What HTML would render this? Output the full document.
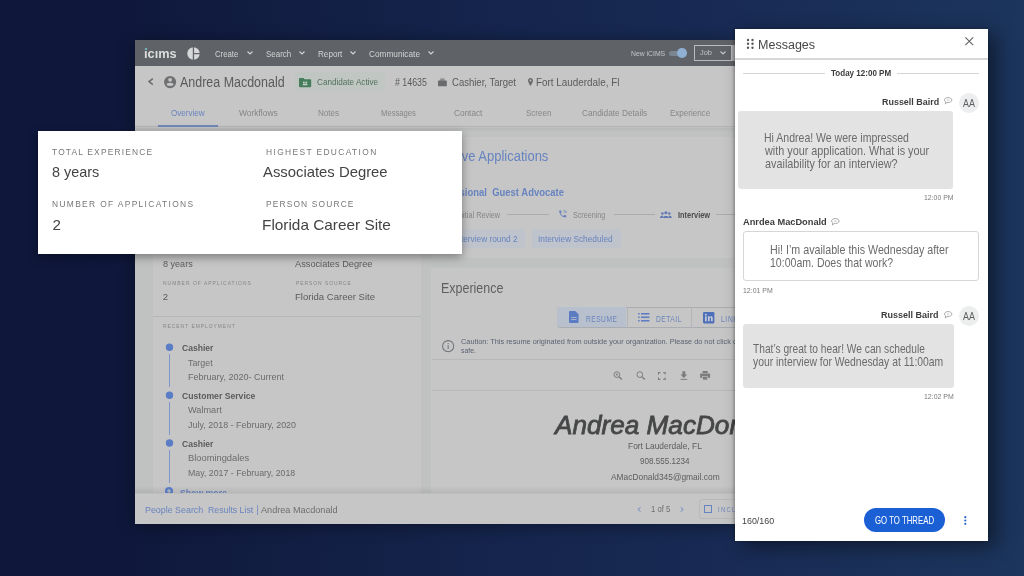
<!DOCTYPE html>
<html><head><meta charset="utf-8">
<style>
html,body{margin:0;padding:0;width:1024px;height:576px;overflow:hidden}
body{position:relative;font-family:"Liberation Sans",sans-serif;background:linear-gradient(90deg,#0f173b 0%,#0f183c 12%,#121d42 26%,#15254d 50%,#192c55 75%,#1c355c 100%)}
.a{position:absolute}
.t{position:absolute;white-space:pre;line-height:1;transform-origin:0 0}
svg{position:absolute;overflow:visible}
</style></head><body>
<div id="w" style="position:absolute;left:0;top:0;width:1024px;height:576px;filter:blur(0.45px)">

<!-- ================= APP WINDOW ================= -->
<div class="a" style="left:135px;top:39.5px;width:600px;height:484.5px;background:#c0c2c1;box-shadow:0 2px 16px rgba(0,0,0,.4)"></div>
<!-- nav -->
<div class="a" style="left:135px;top:39.5px;width:600px;height:26.2px;background:#5f6266"></div>
<!-- subheader -->
<div class="a" style="left:135px;top:65.7px;width:600px;height:60.6px;background:#c6c6c6"></div>
<div class="a" style="left:135px;top:126.3px;width:600px;height:1.2px;background:#b3b5b5"></div>
<div class="a" style="left:135px;top:128px;width:600px;height:4px;background:linear-gradient(#b7b9b9,#c0c2c1)"></div>
<!-- left card -->
<div class="a" style="left:152.6px;top:134px;width:268.7px;height:360px;background:#c6c6c6"></div>
<div class="a" style="left:152.6px;top:316px;width:268.7px;height:1px;background:#b5b6b6"></div>
<!-- active apps card -->
<div class="a" style="left:431.5px;top:137.2px;width:303.5px;height:120.8px;background:#c6c6c6;border-radius:2px"></div>
<!-- experience card -->
<div class="a" style="left:430.8px;top:267.8px;width:304.2px;height:226px;background:#c6c6c6;border-radius:2px"></div>
<div class="a" style="left:431.7px;top:359px;width:303.3px;height:1px;background:#b7b8b8"></div>
<div class="a" style="left:431.7px;top:389.7px;width:303.3px;height:1px;background:#b7b8b8"></div>

<!-- nav icons -->
<div class="a" style="left:145px;top:47.8px;width:2.2px;height:2.2px;background:#70b3ba"></div>
<svg style="left:187px;top:46.7px" width="13" height="13" viewBox="0 0 13 13"><circle cx="6.5" cy="6.5" r="6.2" fill="#d6d7d8"/><rect x="5.8" y="0" width="1.3" height="13" fill="#5f6266"/><rect x="7" y="6" width="6" height="1.2" fill="#5f6266"/></svg>
<svg style="left:246.5px;top:51px" width="6" height="4" viewBox="0 0 6 4"><polyline points="0.5,0.5 3,3 5.5,0.5" fill="none" stroke="#d3d4d5" stroke-width="1.1"/></svg>
<svg style="left:298.5px;top:51px" width="6" height="4" viewBox="0 0 6 4"><polyline points="0.5,0.5 3,3 5.5,0.5" fill="none" stroke="#d3d4d5" stroke-width="1.1"/></svg>
<svg style="left:350px;top:51px" width="6" height="4" viewBox="0 0 6 4"><polyline points="0.5,0.5 3,3 5.5,0.5" fill="none" stroke="#d3d4d5" stroke-width="1.1"/></svg>
<svg style="left:428.2px;top:51px" width="6" height="4" viewBox="0 0 6 4"><polyline points="0.5,0.5 3,3 5.5,0.5" fill="none" stroke="#d3d4d5" stroke-width="1.1"/></svg>
<div class="a" style="left:669px;top:50.6px;width:17.5px;height:5px;background:#7b8591;border-radius:3px"></div>
<div class="a" style="left:677px;top:48.2px;width:9.8px;height:9.8px;background:#8fb0d2;border-radius:50%"></div>
<div class="a" style="left:694px;top:45.2px;width:38px;height:15.7px;border:1px solid #b9bbbd;box-sizing:border-box"></div>
<svg style="left:719.5px;top:51.3px" width="6" height="4" viewBox="0 0 6 4"><polyline points="0.5,0.5 3,3 5.5,0.5" fill="none" stroke="#c8c9ca" stroke-width="1.1"/></svg>
<div class="a" style="left:732px;top:45.2px;width:3px;height:15.7px;background:#a9abad"></div>

<!-- subheader icons -->
<svg style="left:147.9px;top:78.3px" width="5.6" height="7.2" viewBox="0 0 5.6 7.2"><polyline points="4.8,0.6 1,3.6 4.8,6.6" fill="none" stroke="#6a6b6c" stroke-width="1.5"/></svg>
<svg style="left:164.1px;top:75.9px" width="12.2" height="12.2" viewBox="0 0 24 24"><circle cx="12" cy="12" r="12" fill="#707172"/><circle cx="12" cy="7.4" r="3.7" fill="#c6c6c6"/><ellipse cx="12" cy="16.4" rx="6.6" ry="3.3" fill="#c6c6c6"/></svg>
<div class="a" style="left:295.4px;top:72.2px;width:89.9px;height:19.2px;background:#c0c7c3;border-radius:3px"></div>
<svg style="left:298.7px;top:77.6px" width="12.2" height="9.2" viewBox="0 0 12 9"><path d="M0 0.8 Q0 0 0.8 0 H4.4 L5.6 1.2 H11.2 Q12 1.2 12 2 V8.2 Q12 9 11.2 9 H0.8 Q0 9 0 8.2Z" fill="#467d5c"/><circle cx="4.8" cy="4.4" r="0.9" fill="#c9d6cf"/><circle cx="7.2" cy="4.4" r="0.9" fill="#c9d6cf"/><rect x="3.6" y="5.6" width="4.8" height="1.6" rx="0.8" fill="#c9d6cf"/></svg>
<svg style="left:437.8px;top:78.5px" width="8.8" height="7.4" viewBox="0 0 9 7.5"><rect x="0" y="1.6" width="9" height="5.9" rx="0.6" fill="#6a6b6c"/><rect x="3" y="0" width="3" height="2.2" fill="none" stroke="#6a6b6c" stroke-width="0.9"/></svg>
<svg style="left:528px;top:77.8px" width="5" height="8" viewBox="0 0 10 16"><path d="M5 0 C2.2 0 0 2.2 0 5 C0 8.8 5 16 5 16 C5 16 10 8.8 10 5 C10 2.2 7.8 0 5 0Z M5 3.2 A1.8 1.8 0 1 1 5 6.8 A1.8 1.8 0 1 1 5 3.2Z" fill="#6a6b6c" fill-rule="evenodd"/></svg>
<!-- tab underline -->
<div class="a" style="left:157.6px;top:125px;width:60.6px;height:2px;background:#6f88b6"></div>

<!-- left card timeline -->
<svg style="left:0;top:0" width="1" height="1"><circle cx="169.5" cy="347.2" r="3.7" fill="#5b7dc6"/></svg>
<div class="a" style="left:169px;top:354px;width:1px;height:33.3px;background:#7f98cc"></div>
<svg style="left:0;top:0" width="1" height="1"><circle cx="169.5" cy="395.2" r="3.7" fill="#5b7dc6"/></svg>
<div class="a" style="left:169px;top:402px;width:1px;height:33.3px;background:#7f98cc"></div>
<svg style="left:0;top:0" width="1" height="1"><circle cx="169.5" cy="443.0" r="3.7" fill="#5b7dc6"/></svg>
<div class="a" style="left:169px;top:450.3px;width:1px;height:32.5px;background:#7f98cc"></div>
<svg style="left:165.3px;top:486.6px" width="8" height="8" viewBox="0 0 8 8"><circle cx="4" cy="4" r="4" fill="#5a7ecb"/><path d="M4 2 V6 M2 4 H6" stroke="#cacaca" stroke-width="1"/></svg>

<!-- active apps card details -->
<div class="a" style="left:507px;top:214.3px;width:41.8px;height:1px;background:#ababab"></div>
<div class="a" style="left:613.6px;top:214.3px;width:41.2px;height:1px;background:#ababab"></div>
<div class="a" style="left:716px;top:214.3px;width:19px;height:1px;background:#ababab"></div>
<svg style="left:558px;top:209.3px" width="9.4" height="9.8" viewBox="0 0 24 24"><path d="M6.6 10.8c1.4 2.8 3.8 5.1 6.6 6.6l2.2-2.2c.3-.3.7-.4 1-.2 1.1.4 2.3.6 3.6.6.6 0 1 .4 1 1V20c0 .6-.4 1-1 1C10.6 21 3 13.4 3 4c0-.6.4-1 1-1h3.5c.6 0 1 .4 1 1 0 1.3.2 2.5.6 3.6.1.3 0 .7-.2 1L6.6 10.8z" fill="#6b82bb"/><path d="M14.5 2.5 a7.5 7.5 0 0 1 7 7 M14.5 6.2 a3.8 3.8 0 0 1 3.4 3.4" fill="none" stroke="#6b82bb" stroke-width="1.8"/></svg>
<svg style="left:660.4px;top:210.8px" width="11.8" height="7" viewBox="0 0 24 14"><circle cx="12" cy="3.5" r="3.2" fill="#5f78b4"/><circle cx="5" cy="5" r="2.5" fill="#5f78b4"/><circle cx="19" cy="5" r="2.5" fill="#5f78b4"/><path d="M6 14 C6 9 18 9 18 14Z" fill="#5f78b4"/><path d="M0 14 C0 10 4 9 6.5 10 L5 14Z M24 14 C24 10 20 9 17.5 10 L19 14Z" fill="#5f78b4"/></svg>
<div class="a" style="left:440px;top:229.3px;width:85px;height:18.3px;background:#bfc3cb;border-radius:2px"></div>
<div class="a" style="left:532.1px;top:229.3px;width:88.5px;height:18.3px;background:#bfc3cb;border-radius:2px"></div>

<!-- experience card details -->
<div class="a" style="left:556.7px;top:306.7px;width:190px;height:20.9px;border:1px solid #a9acb0;border-radius:3px;box-sizing:border-box"></div>
<div class="a" style="left:557.2px;top:307.2px;width:69.3px;height:19.9px;background:#b8c0cd;border-radius:2.5px 0 0 2.5px"></div>
<div class="a" style="left:626.5px;top:306.7px;width:1px;height:20.9px;background:#b3b4b6"></div>
<div class="a" style="left:691.4px;top:306.7px;width:1px;height:20.9px;background:#b3b4b6"></div>
<svg style="left:568.6px;top:311.3px" width="9.6" height="12" viewBox="0 0 10 12.5"><path d="M0 1 Q0 0 1 0 H6.5 L10 3.5 V11.5 Q10 12.5 9 12.5 H1 Q0 12.5 0 11.5Z" fill="#5b7bc2"/><rect x="2.2" y="6.2" width="5.6" height="0.9" fill="#b8c0cd"/><rect x="2.2" y="8.4" width="5.6" height="0.9" fill="#b8c0cd"/></svg>
<svg style="left:637.9px;top:313px" width="11.6" height="8.5" viewBox="0 0 12 9"><g fill="#5b7bc2"><rect x="0" y="0" width="1.6" height="1.6"/><rect x="0" y="3.7" width="1.6" height="1.6"/><rect x="0" y="7.4" width="1.6" height="1.6"/><rect x="3" y="0" width="9" height="1.6"/><rect x="3" y="3.7" width="9" height="1.6"/><rect x="3" y="7.4" width="9" height="1.6"/></g></svg>
<svg style="left:703.4px;top:311.5px" width="11.4" height="11.4" viewBox="0 0 12 12"><rect width="12" height="12" rx="1.2" fill="#4f6fb8"/><rect x="2.2" y="4.6" width="1.7" height="5.2" fill="#c8cdd8"/><circle cx="3.05" cy="2.9" r="1" fill="#c8cdd8"/><path d="M5.3 4.6 H6.9 V5.4 C7.3 4.7 8 4.5 8.6 4.5 C9.8 4.5 10.2 5.3 10.2 6.5 V9.8 H8.5 V6.9 C8.5 6.2 8.3 5.9 7.8 5.9 C7.2 5.9 7 6.3 7 7 V9.8 H5.3Z" fill="#c8cdd8"/></svg>
<svg style="left:441.9px;top:340.4px" width="12.3" height="12.3" viewBox="0 0 12 12"><circle cx="6" cy="6" r="5.4" fill="none" stroke="#6e7278" stroke-width="1"/><rect x="5.5" y="5" width="1" height="3.8" fill="#6e7278"/><rect x="5.5" y="3" width="1" height="1" fill="#6e7278"/></svg>
<!-- toolbar icons -->
<svg style="left:613px;top:371px" width="9.5" height="9" viewBox="0 0 10 10"><circle cx="4" cy="4" r="3.2" fill="none" stroke="#7c7d7e" stroke-width="1.1"/><path d="M6.4 6.4 L9.5 9.5" stroke="#7c7d7e" stroke-width="1.4"/><path d="M4 2.5 V5.5 M2.5 4 H5.5" stroke="#7c7d7e" stroke-width="0.8"/></svg>
<svg style="left:635.7px;top:371px" width="9.5" height="9" viewBox="0 0 10 10"><circle cx="4" cy="4" r="3.2" fill="none" stroke="#7c7d7e" stroke-width="1.1"/><path d="M6.4 6.4 L9.5 9.5" stroke="#7c7d7e" stroke-width="1.4"/></svg>
<svg style="left:657.8px;top:371.5px" width="7.7" height="8" viewBox="0 0 8 8"><path d="M0.5 2.5 V0.5 H2.5 M5.5 0.5 H7.5 V2.5 M7.5 5.5 V7.5 H5.5 M2.5 7.5 H0.5 V5.5" fill="none" stroke="#7c7d7e" stroke-width="1.1"/></svg>
<svg style="left:679.7px;top:371px" width="7.7" height="9" viewBox="0 0 8 9"><path d="M2.5 0 H5.5 V3.5 H7.5 L4 7 L0.5 3.5 H2.5Z" fill="#7c7d7e"/><rect x="0.5" y="8" width="7" height="1" fill="#7c7d7e"/></svg>
<svg style="left:700.3px;top:371px" width="10.2" height="9" viewBox="0 0 10 9"><rect x="2.5" y="0" width="5" height="2" fill="#7c7d7e"/><rect x="0" y="2.5" width="10" height="4.5" rx="1" fill="#7c7d7e"/><rect x="2.5" y="5.5" width="5" height="3.5" fill="#7c7d7e" stroke="#cacaca" stroke-width="0.6"/></svg>

<div class="t" style="left:144.03px;top:47.08px;font-size:13.08px;color:#dcdddd;font-weight:700;transform:scaleX(0.975)">ıcıms</div>
<div class="t" style="left:215.20px;top:48.65px;font-size:9.59px;color:#d3d4d5;transform:scaleX(0.810)">Create</div>
<div class="t" style="left:266.10px;top:48.65px;font-size:9.59px;color:#d3d4d5;transform:scaleX(0.830)">Search</div>
<div class="t" style="left:317.90px;top:48.65px;font-size:9.59px;color:#d3d4d5;transform:scaleX(0.848)">Report</div>
<div class="t" style="left:369.40px;top:48.65px;font-size:9.59px;color:#d3d4d5;transform:scaleX(0.863)">Communicate</div>
<div class="t" style="left:630.50px;top:49.62px;font-size:7.27px;color:#c4c6c8;transform:scaleX(0.939)">New iCIMS</div>
<div class="t" style="left:700.00px;top:49.40px;font-size:7.99px;color:#c4c6c8;transform:scaleX(0.923)">Job</div>
<div class="t" style="left:180.10px;top:76.14px;font-size:13.95px;color:#5a5b5c;transform:scaleX(0.894)">Andrea Macdonald</div>
<div class="t" style="left:317.00px;top:77.20px;font-size:9.88px;color:#52705c;transform:scaleX(0.824)">Candidate Active</div>
<div class="t" style="left:395.20px;top:78.25px;font-size:10.17px;color:#5a5b5c;transform:scaleX(0.870)"># 14635</div>
<div class="t" style="left:451.50px;top:78.25px;font-size:10.17px;color:#5a5b5c;transform:scaleX(0.938)">Cashier, Target</div>
<div class="t" style="left:536.43px;top:78.25px;font-size:10.17px;color:#5a5b5c;transform:scaleX(0.973)">Fort Lauderdale, Fl</div>
<div class="t" style="left:170.80px;top:107.97px;font-size:9.45px;color:#6884c0;transform:scaleX(0.855)">Overview</div>
<div class="t" style="left:238.70px;top:107.97px;font-size:9.45px;color:#858687;transform:scaleX(0.893)">Workflows</div>
<div class="t" style="left:317.80px;top:107.97px;font-size:9.45px;color:#858687;transform:scaleX(0.856)">Notes</div>
<div class="t" style="left:381.10px;top:107.97px;font-size:9.45px;color:#858687;transform:scaleX(0.812)">Messages</div>
<div class="t" style="left:454.20px;top:107.97px;font-size:9.45px;color:#858687;transform:scaleX(0.873)">Contact</div>
<div class="t" style="left:526.30px;top:107.97px;font-size:9.45px;color:#858687;transform:scaleX(0.847)">Screen</div>
<div class="t" style="left:582.00px;top:107.97px;font-size:9.45px;color:#858687;transform:scaleX(0.876)">Candidate Details</div>
<div class="t" style="left:669.80px;top:107.97px;font-size:9.45px;color:#858687;transform:scaleX(0.849)">Experience</div>
<div class="t" style="left:162.80px;top:259.25px;font-size:9.59px;color:#5a5b5c;transform:scaleX(0.945)">8 years</div>
<div class="t" style="left:294.70px;top:259.25px;font-size:9.59px;color:#5a5b5c;transform:scaleX(0.963)">Associates Degree</div>
<div class="t" style="left:162.80px;top:281.46px;font-size:5.81px;color:#858687;transform:scaleX(0.850);letter-spacing:1.21px">NUMBER OF APPLICATIONS</div>
<div class="t" style="left:296.10px;top:281.46px;font-size:5.81px;color:#858687;transform:scaleX(0.850);letter-spacing:1.13px">PERSON SOURCE</div>
<div class="t" style="left:162.80px;top:292.05px;font-size:9.59px;color:#5a5b5c">2</div>
<div class="t" style="left:294.70px;top:292.05px;font-size:9.59px;color:#5a5b5c;transform:scaleX(0.996)">Florida Career Site</div>
<div class="t" style="left:162.80px;top:323.96px;font-size:5.81px;color:#858687;transform:scaleX(0.850);letter-spacing:1.15px">RECENT EMPLOYMENT</div>
<div class="t" style="left:182.00px;top:343.25px;font-size:9.59px;color:#5a5b5c;font-weight:700;transform:scaleX(0.894)">Cashier</div>
<div class="t" style="left:188.30px;top:357.75px;font-size:9.59px;color:#6a6b6c;transform:scaleX(0.926)">Target</div>
<div class="t" style="left:188.30px;top:372.25px;font-size:9.59px;color:#6a6b6c;transform:scaleX(0.942)">February, 2020- Current</div>
<div class="t" style="left:182.00px;top:391.00px;font-size:9.59px;color:#5a5b5c;font-weight:700;transform:scaleX(0.901)">Customer Service</div>
<div class="t" style="left:187.50px;top:405.25px;font-size:9.59px;color:#6a6b6c;transform:scaleX(0.958)">Walmart</div>
<div class="t" style="left:187.60px;top:420.25px;font-size:9.59px;color:#6a6b6c;transform:scaleX(0.934)">July, 2018 - February, 2020</div>
<div class="t" style="left:182.00px;top:438.75px;font-size:9.59px;color:#5a5b5c;font-weight:700;transform:scaleX(0.894)">Cashier</div>
<div class="t" style="left:187.60px;top:453.45px;font-size:9.59px;color:#6a6b6c;transform:scaleX(0.973)">Bloomingdales</div>
<div class="t" style="left:187.60px;top:467.95px;font-size:9.59px;color:#6a6b6c;transform:scaleX(0.918)">May, 2017 - February, 2018</div>
<div class="t" style="left:179.60px;top:487.75px;font-size:9.59px;color:#6884c0;font-weight:700;transform:scaleX(0.908)">Show more</div>
<div class="t" style="left:440.47px;top:149.39px;font-size:14.24px;color:#6884c0;transform:scaleX(0.913)">Active Applications</div>
<div class="t" style="left:429.78px;top:187.41px;font-size:11.05px;color:#6884c0;font-weight:700;transform:scaleX(0.858)">Professional  Guest Advocate</div>
<div class="t" style="left:457.22px;top:210.59px;font-size:8.72px;color:#858687;transform:scaleX(0.840)">Initial Review</div>
<div class="t" style="left:573.30px;top:210.59px;font-size:8.72px;color:#858687;transform:scaleX(0.821)">Screening</div>
<div class="t" style="left:677.70px;top:210.59px;font-size:8.72px;color:#4a4b4c;font-weight:700;transform:scaleX(0.850)">Interview</div>
<div class="t" style="left:454.16px;top:234.40px;font-size:9.88px;color:#6884c0;transform:scaleX(0.840)">Interview round 2</div>
<div class="t" style="left:538.46px;top:234.40px;font-size:9.88px;color:#6884c0;transform:scaleX(0.839)">Interview Scheduled</div>
<div class="t" style="left:440.64px;top:280.85px;font-size:14.53px;color:#5e5f60;transform:scaleX(0.859)">Experience</div>
<div class="t" style="left:585.80px;top:314.54px;font-size:9.01px;color:#6a84bc;transform:scaleX(0.740);letter-spacing:0.64px">RESUME</div>
<div class="t" style="left:655.70px;top:314.54px;font-size:9.01px;color:#6a84bc;transform:scaleX(0.740);letter-spacing:0.69px">DETAIL</div>
<div class="t" style="left:721.00px;top:314.54px;font-size:9.01px;color:#6a84bc;transform:scaleX(0.740);letter-spacing:0.90px">LINKEDIN</div>
<div class="t" style="left:460.50px;top:338.20px;font-size:7.99px;color:#5a6272;transform:scaleX(0.919)">Caution: This resume originated from outside your organization. Please do not click on links unless you know the content is</div>
<div class="t" style="left:460.50px;top:346.50px;font-size:7.99px;color:#5a6272;transform:scaleX(0.865)">safe.</div>
<div class="t" style="left:554.83px;top:413.38px;font-size:25.44px;color:#464748;font-style:italic;transform:scaleX(1.028);-webkit-text-stroke:0.8px #464748">Andrea MacDonald</div>
<div class="t" style="left:628.30px;top:442.32px;font-size:9.16px;color:#5c5d5e;transform:scaleX(0.918)">Fort Lauderdale, FL</div>
<div class="t" style="left:640.00px;top:457.32px;font-size:9.16px;color:#5c5d5e;transform:scaleX(0.882)">908.555.1234</div>
<div class="t" style="left:610.70px;top:472.62px;font-size:9.16px;color:#5c5d5e;transform:scaleX(0.915)">AMacDonald345@gmail.com</div>
<!-- footer -->
<div class="a" style="left:135px;top:486px;width:600px;height:7px;background:linear-gradient(rgba(0,0,0,0),rgba(0,0,0,.08))"></div>
<div class="a" style="left:135px;top:492.5px;width:600px;height:31.5px;background:#c6c6c6;border-top:1px solid #bdbdbd;box-sizing:border-box"></div>
<!-- footer extras -->
<div class="a" style="left:256.6px;top:504.5px;width:0.9px;height:10px;background:#8299c8"></div>
<svg style="left:636.9px;top:506.7px" width="4.2" height="4.8" viewBox="0 0 4 5"><polyline points="3.5,0.3 0.8,2.5 3.5,4.7" fill="none" stroke="#6884c0" stroke-width="1"/></svg>
<svg style="left:680px;top:506.7px" width="4.2" height="4.8" viewBox="0 0 4 5"><polyline points="0.5,0.3 3.2,2.5 0.5,4.7" fill="none" stroke="#6884c0" stroke-width="1"/></svg>
<div class="a" style="left:699.1px;top:498.9px;width:60px;height:19.7px;border:1px solid #b8b9ba;border-radius:3px;box-sizing:border-box"></div>
<div class="a" style="left:704px;top:504.6px;width:8.2px;height:8.2px;border:1.2px solid #6884c0;box-sizing:border-box"></div>

<div class="t" style="left:145.20px;top:504.55px;font-size:9.59px;color:#6884c0;transform:scaleX(0.927)">People Search</div>
<div class="t" style="left:208.10px;top:504.55px;font-size:9.59px;color:#6884c0;transform:scaleX(0.914)">Results List</div>
<div class="t" style="left:261.20px;top:504.55px;font-size:9.59px;color:#6d6e6f;transform:scaleX(0.953)">Andrea Macdonald</div>
<div class="t" style="left:650.60px;top:505.09px;font-size:8.72px;color:#6d6e6f;transform:scaleX(0.882)">1 of 5</div>
<div class="t" style="left:717.90px;top:505.53px;font-size:7.85px;color:#6a84bc;transform:scaleX(0.740);letter-spacing:1.77px">INCLUDE</div>

<!-- ================= TOOLTIP ================= -->
<div class="a" style="left:38px;top:131px;width:424px;height:123px;background:#fff;box-shadow:0 3px 9px rgba(0,0,0,.38)"></div>
<div class="t" style="left:52.40px;top:147.00px;font-size:9.88px;color:#777777;transform:scaleX(0.850);letter-spacing:1.38px">TOTAL EXPERIENCE</div>
<div class="t" style="left:266.30px;top:147.00px;font-size:9.88px;color:#777777;transform:scaleX(0.850);letter-spacing:1.61px">HIGHEST EDUCATION</div>
<div class="t" style="left:52.40px;top:164.28px;font-size:15.55px;color:#444444;transform:scaleX(0.927)">8 years</div>
<div class="t" style="left:263.20px;top:164.28px;font-size:15.55px;color:#444444;transform:scaleX(0.955)">Associates Degree</div>
<div class="t" style="left:52.40px;top:199.40px;font-size:9.88px;color:#777777;transform:scaleX(0.850);letter-spacing:1.59px">NUMBER OF APPLICATIONS</div>
<div class="t" style="left:266.30px;top:199.40px;font-size:9.88px;color:#777777;transform:scaleX(0.850);letter-spacing:1.35px">PERSON SOURCE</div>
<div class="t" style="left:52.40px;top:217.05px;font-size:15.12px;color:#444444">2</div>
<div class="t" style="left:262.21px;top:216.68px;font-size:15.55px;color:#444444;transform:scaleX(0.988)">Florida Career Site</div>

<!-- ================= MESSAGES ================= -->
<div class="a" style="left:735px;top:29.2px;width:253.3px;height:511.6px;background:#fff;box-shadow:8px 5px 18px rgba(0,0,0,.45),-1px 0 3px rgba(0,0,0,.3)"></div>
<div class="a" style="left:735px;top:58px;width:253.3px;height:1.5px;background:#d8d8d8"></div>
<svg style="left:747.3px;top:38.7px" width="7" height="10" viewBox="0 0 7 10"><g fill="#5a5a5a"><circle cx="1" cy="1" r="1.2"/><circle cx="5.5" cy="1" r="1.2"/><circle cx="1" cy="4.8" r="1.2"/><circle cx="5.5" cy="4.8" r="1.2"/><circle cx="1" cy="8.7" r="1.2"/><circle cx="5.5" cy="8.7" r="1.2"/></g></svg>
<svg style="left:964.6px;top:36.8px" width="8.6" height="8.6" viewBox="0 0 9 9"><path d="M0.4 0.4 L8.6 8.6 M8.6 0.4 L0.4 8.6" stroke="#666" stroke-width="1.2"/></svg>
<div class="a" style="left:742.9px;top:73px;width:82.5px;height:1px;background:#d4d4d4"></div>
<div class="a" style="left:896.7px;top:73px;width:82.3px;height:1px;background:#d4d4d4"></div>
<!-- avatar 1 -->
<div class="a" style="left:959px;top:93.3px;width:20px;height:20px;border-radius:50%;background:#eceeef"></div>
<svg style="left:943.7px;top:96.9px" width="8.3" height="7.6" viewBox="0 0 10 9"><path d="M5 0.6 C7.4 0.6 9.4 1.9 9.4 3.6 C9.4 5.3 7.4 6.6 5 6.6 C4.5 6.6 4 6.55 3.6 6.45 L1.6 8.4 L2 5.9 C1 5.3 0.6 4.5 0.6 3.6 C0.6 1.9 2.6 0.6 5 0.6Z" fill="none" stroke="#a0a0a0" stroke-width="1.1"/><ellipse cx="5" cy="3.6" rx="1.6" ry="1" fill="#d0d0d0"/></svg>
<div class="a" style="left:737.7px;top:111.3px;width:215.8px;height:77.3px;background:#e3e3e3;border-radius:3px"></div>
<!-- message 2 -->
<svg style="left:830.9px;top:217.5px" width="8.7" height="7.6" viewBox="0 0 10 9"><path d="M5 0.6 C7.4 0.6 9.4 1.9 9.4 3.6 C9.4 5.3 7.4 6.6 5 6.6 C4.5 6.6 4 6.55 3.6 6.45 L1.6 8.4 L2 5.9 C1 5.3 0.6 4.5 0.6 3.6 C0.6 1.9 2.6 0.6 5 0.6Z" fill="none" stroke="#a0a0a0" stroke-width="1.1"/><ellipse cx="5" cy="3.6" rx="1.6" ry="1" fill="#d0d0d0"/></svg>
<div class="a" style="left:743.2px;top:231.1px;width:235.8px;height:50.3px;background:#fff;border:1px solid #d6d6d6;border-radius:3px;box-sizing:border-box"></div>
<!-- message 3 -->
<div class="a" style="left:959px;top:306.2px;width:20px;height:20px;border-radius:50%;background:#eceeed"></div>
<svg style="left:943.7px;top:310.5px" width="8.3" height="7.6" viewBox="0 0 10 9"><path d="M5 0.6 C7.4 0.6 9.4 1.9 9.4 3.6 C9.4 5.3 7.4 6.6 5 6.6 C4.5 6.6 4 6.55 3.6 6.45 L1.6 8.4 L2 5.9 C1 5.3 0.6 4.5 0.6 3.6 C0.6 1.9 2.6 0.6 5 0.6Z" fill="none" stroke="#a0a0a0" stroke-width="1.1"/><ellipse cx="5" cy="3.6" rx="1.6" ry="1" fill="#d0d0d0"/></svg>
<div class="a" style="left:743.2px;top:324.2px;width:210.4px;height:64.2px;background:#e3e3e3;border-radius:3px"></div>
<!-- bottom -->
<div class="a" style="left:864px;top:508.2px;width:80.7px;height:23.4px;background:#1b5fd5;border-radius:12px"></div>
<svg style="left:964px;top:515.5px" width="2.6" height="9" viewBox="0 0 2.6 9"><g fill="#2a62cf"><circle cx="1.3" cy="1.2" r="1.1"/><circle cx="1.3" cy="4.5" r="1.1"/><circle cx="1.3" cy="7.8" r="1.1"/></g></svg>
<div class="t" style="left:757.90px;top:38.98px;font-size:12.50px;color:#474747;transform:scaleX(1.002)">Messages</div>
<div class="t" style="left:831.30px;top:69.22px;font-size:9.16px;color:#3c3c3c;font-weight:700;transform:scaleX(0.878)">Today 12:00 PM</div>
<div class="t" style="left:881.80px;top:96.62px;font-size:9.74px;color:#3c3c3c;font-weight:700;transform:scaleX(0.918)">Russell Baird</div>
<div class="t" style="left:963.20px;top:99.10px;font-size:10.47px;color:#606060;transform:scaleX(0.850)">AA</div>
<div class="t" style="left:764.43px;top:131.55px;font-size:12.06px;color:#6b6b6b;transform:scaleX(0.874)">Hi Andrea! We were impressed</div>
<div class="t" style="left:765.30px;top:145.05px;font-size:12.06px;color:#6b6b6b;transform:scaleX(0.898)">with your application. What is your</div>
<div class="t" style="left:765.30px;top:158.45px;font-size:12.06px;color:#6b6b6b;transform:scaleX(0.900)">availability for an interview?</div>
<div class="t" style="left:923.85px;top:193.52px;font-size:7.27px;color:#7a7a7a;transform:scaleX(0.950)">12:00 PM</div>
<div class="t" style="left:743.00px;top:217.02px;font-size:9.74px;color:#3c3c3c;font-weight:700;transform:scaleX(0.950)">Anrdea MacDonald</div>
<div class="t" style="left:769.71px;top:244.15px;font-size:12.06px;color:#6b6b6b;transform:scaleX(0.887)">Hi! I’m available this Wednesday after</div>
<div class="t" style="left:769.73px;top:257.45px;font-size:12.06px;color:#6b6b6b;transform:scaleX(0.875)">10:00am. Does that work?</div>
<div class="t" style="left:742.74px;top:286.82px;font-size:7.27px;color:#7a7a7a;transform:scaleX(0.957)">12:01 PM</div>
<div class="t" style="left:881.40px;top:310.02px;font-size:9.74px;color:#3c3c3c;font-weight:700;transform:scaleX(0.924)">Russell Baird</div>
<div class="t" style="left:963.20px;top:311.70px;font-size:10.47px;color:#606060;transform:scaleX(0.850)">AA</div>
<div class="t" style="left:752.90px;top:343.15px;font-size:12.06px;color:#6b6b6b;transform:scaleX(0.846)">That’s great to hear! We can schedule</div>
<div class="t" style="left:752.90px;top:356.35px;font-size:12.06px;color:#6b6b6b;transform:scaleX(0.860)">your interview for Wednesday at 11:00am</div>
<div class="t" style="left:923.74px;top:393.12px;font-size:7.27px;color:#7a7a7a;transform:scaleX(0.957)">12:02 PM</div>
<div class="t" style="left:742.29px;top:515.72px;font-size:9.74px;color:#444444;transform:scaleX(0.915)">160/160</div>
<div class="t" style="left:875.00px;top:515.85px;font-size:10.17px;color:#ffffff;transform:scaleX(0.769)">GO TO THREAD</div>

</div>
</body></html>
